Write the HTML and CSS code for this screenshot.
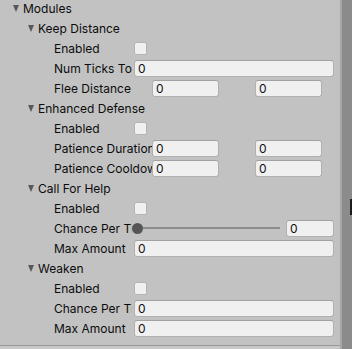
FILE: index.html
```html
<!DOCTYPE html>
<html lang="en">
<head>
    <meta charset="UTF-8">
    <title>Modules</title>
    <link rel="stylesheet" href="styles.css">
</head>
<body>
    <div class="window">
        <div class="panel">
            <div class="list">
                <div class="row lvl0"><span class="arrow"></span><span class="head">Modules</span></div>

                <div class="row lvl1"><span class="arrow"></span><span class="head">Keep Distance</span></div>
                <div class="row lvl2"><span class="label">Enabled</span><span class="check"></span></div>
                <div class="row lvl2"><span class="label">Num Ticks To Flee</span><span class="field wide">0</span></div>
                <div class="row lvl2"><span class="label lbl-vec">Flee Distance</span><span class="field half">0</span><span class="field half second">0</span></div>

                <div class="row lvl1"><span class="arrow"></span><span class="head">Enhanced Defense</span></div>
                <div class="row lvl2"><span class="label">Enabled</span><span class="check"></span></div>
                <div class="row lvl2"><span class="label lbl-vec">Patience Duration</span><span class="field half">0</span><span class="field half second">0</span></div>
                <div class="row lvl2"><span class="label lbl-vec">Patience Cooldown</span><span class="field half">0</span><span class="field half second">0</span></div>

                <div class="row lvl1"><span class="arrow"></span><span class="head">Call For Help</span></div>
                <div class="row lvl2"><span class="label">Enabled</span><span class="check"></span></div>
                <div class="row lvl2">
                    <span class="label lbl-short">Chance Per Tick</span>
                    <span class="slider"><span class="knob"></span><span class="track"></span></span>
                    <span class="field small">0</span>
                </div>
                <div class="row lvl2"><span class="label">Max Amount</span><span class="field wide">0</span></div>

                <div class="row lvl1"><span class="arrow"></span><span class="head">Weaken</span></div>
                <div class="row lvl2"><span class="label">Enabled</span><span class="check"></span></div>
                <div class="row lvl2"><span class="label lbl-short">Chance Per Tick</span><span class="field wide gap">0</span></div>
                <div class="row lvl2"><span class="label">Max Amount</span><span class="field wide">0</span></div>
            </div>
        </div>
        <div class="scrollbar"><span class="thumb-edge"></span></div>
    </div>
</body>
</html>
```

FILE: styles.css
```css
* {
    margin: 0;
    padding: 0;
    box-sizing: border-box;
}

body {
    font-family: Inter, "Noto Sans", sans-serif;
    font-size: 12px;
    color: #0c0c0c;
    background-color: #c8c8c8;
    width: 352px;
    height: 349px;
    overflow: hidden;
}

.window {
    display: flex;
    height: 349px;
}

.panel {
    width: 340px;
    height: 346px;
    background-color: #c2c2c2;
    border-bottom: 1px solid #999;
    overflow: hidden;
}

.list {
    margin-top: -2px;
}

.row {
    display: flex;
    align-items: center;
    height: 20px;
    white-space: nowrap;
}

.lvl0 {
    padding-left: 13px;
}

.lvl1 {
    padding-left: 28px;
}

.lvl2 {
    padding-left: 54px;
}

.arrow {
    width: 0;
    height: 0;
    border-left: 3.5px solid transparent;
    border-right: 3.5px solid transparent;
    border-top: 7px solid #595959;
    margin-right: 4px;
}

.label {
    width: 80px;
    overflow: hidden;
}

.lbl-vec {
    width: 98px;
}

.lbl-short {
    width: 78px;
}

.check {
    width: 13px;
    height: 13px;
    background-color: #f0f0f0;
    border: 1px solid #b4b4b4;
    border-radius: 2px;
}

.field {
    height: 17px;
    line-height: 15px;
    padding-left: 3px;
    background-color: #f0f0f0;
    border: 1px solid #b0b0b0;
    border-top-color: #a2a2a2;
    border-radius: 3px;
    color: #111;
}

.wide {
    width: 200px;
}

.gap {
    margin-left: 2px;
}

.half {
    width: 67px;
}

.second {
    margin-left: 36px;
}

.small {
    width: 48px;
    margin-left: 6px;
}

.slider {
    display: flex;
    align-items: center;
    width: 148px;
}

.knob {
    width: 11px;
    height: 11px;
    border-radius: 50%;
    background-color: #555;
    flex: none;
}

.track {
    height: 2px;
    flex: 1;
    background-color: #8c8c8c;
}

.scrollbar {
    position: relative;
    width: 12px;
    height: 349px;
    background-color: #8b8b8b;
    border-left: 2px solid #a6a6a6;
}

.thumb-edge {
    position: absolute;
    right: 0;
    top: 199px;
    width: 2px;
    height: 16px;
    background-color: #1c1c1c;
}
```
